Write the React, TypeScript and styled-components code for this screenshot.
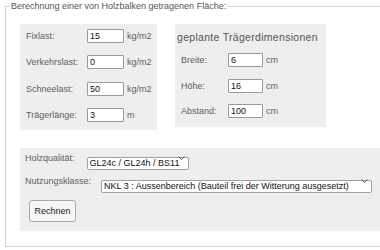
import React from "react";
import styled, { createGlobalStyle } from "styled-components";

const Global = createGlobalStyle`
  html, body { margin: 0; padding: 0; background: #fff; overflow: hidden; }
  body { font-family: "Liberation Sans", Arial, sans-serif; width: 380px; height: 250px; }
`;

const Frame = styled.fieldset`
  box-sizing: border-box;
  width: 375px;
  margin: 1px 0 0 5px;
  padding: 0 0 15px 0;
  border: 1px solid #d4d4d4;
  border-right: none;
  min-width: 0;
`;

const Legend = styled.legend`
  margin-left: 4px;
  padding: 0 1px;
  font-size: 9px;
  line-height: 10px;
  color: #555;
`;

const Content = styled.div`
  padding: 13px 0 0 14px;
  display: flex;
  flex-direction: column;
  gap: 18px;
`;

const TopRow = styled.div`
  display: flex;
  align-items: flex-start;
  gap: 18px;
`;

const Panel = styled.div<{ $w: number }>`
  box-sizing: border-box;
  width: ${(p) => p.$w}px;
  background: #eeeeee;
`;

const LoadPanel = styled(Panel)`
  display: grid;
  grid-template-columns: 58px 37px auto;
  column-gap: 3px;
  row-gap: 12.3px;
  align-items: center;
  padding: 5px 5px 8px 6px;
`;

const DimPanel = styled(Panel)`
  padding: 6px 0 9px 0;
`;

const DimTitle = styled.div`
  font-size: 10.5px;
  line-height: 14px;
  letter-spacing: 0.3px;
  color: #555;
  padding-left: 2px;
  white-space: nowrap;
`;

const DimGrid = styled.div`
  display: grid;
  grid-template-columns: 44px 35px auto;
  column-gap: 3px;
  row-gap: 11.5px;
  align-items: center;
  padding: 9px 0 0 6px;
`;

const Label = styled.span`
  font-size: 9px;
  line-height: 14px;
  color: #606060;
  white-space: nowrap;
`;

const Unit = styled(Label)``;

const Field = styled.input`
  box-sizing: border-box;
  width: 100%;
  height: 14px;
  margin: 0;
  padding: 0 0 0 2px;
  border: 1px solid #9a9a9a;
  border-radius: 1px;
  background: #fff;
  font-family: "Liberation Sans", Arial, sans-serif;
  font-size: 9px;
  color: #111;
  outline: none;
`;

const OptionsPanel = styled.div`
  background: #eeeeee;
  padding: 4px 0 9px 5px;
  display: flex;
  flex-direction: column;
  align-items: flex-start;
`;

const OptionRow = styled.div<{ $gap: number; $mb: number }>`
  display: flex;
  align-items: center;
  gap: ${(p) => p.$gap}px;
  margin-bottom: ${(p) => p.$mb}px;
  height: 13px;
`;

const SelectWrap = styled.div<{ $w: number }>`
  position: relative;
  width: ${(p) => p.$w}px;
  height: 13px;
`;

const Select = styled.select`
  box-sizing: border-box;
  appearance: none;
  -webkit-appearance: none;
  width: 100%;
  height: 100%;
  margin: 0;
  padding: 0 6px 0 2px;
  border: 1px solid #a0a0a0;
  border-radius: 2px;
  background: #fff;
  font-family: "Liberation Sans", Arial, sans-serif;
  font-size: 9px;
  line-height: 11px;
  color: #111;
  outline: none;
`;

const Chevron = styled.svg`
  position: absolute;
  right: 4px;
  top: 4.5px;
  width: 7px;
  height: 4px;
  pointer-events: none;
`;

const Button = styled.button`
  box-sizing: border-box;
  margin: 0 0 0 4px;
  width: 47px;
  height: 22px;
  padding: 0;
  border: 1px solid #a8a8a8;
  border-radius: 3px;
  background: #f6f6f6;
  font-family: "Liberation Sans", Arial, sans-serif;
  font-size: 9px;
  color: #222;
`;

function Dropdown({ w, value }: { w: number; value: string }) {
  return (
    <SelectWrap $w={w}>
      <Select defaultValue={value}>
        <option value={value}>{value}</option>
      </Select>
      <Chevron viewBox="0 0 7 4">
        <path d="M0.6 0.6 L3.5 3.4 L6.4 0.6" fill="none" stroke="#444" strokeWidth="0.9" />
      </Chevron>
    </SelectWrap>
  );
}

const loads = [
  { label: "Fixlast:", value: "15", unit: "kg/m2" },
  { label: "Verkehrslast:", value: "0", unit: "kg/m2" },
  { label: "Schneelast:", value: "50", unit: "kg/m2" },
  { label: "Trägerlänge:", value: "3", unit: "m" },
];

const dims = [
  { label: "Breite:", value: "6", unit: "cm" },
  { label: "Höhe:", value: "16", unit: "cm" },
  { label: "Abstand:", value: "100", unit: "cm" },
];

export default function App() {
  return (
    <>
      <Global />
      <Frame>
        <Legend>Berechnung einer von Holzbalken getragenen Fläche:</Legend>
        <Content>
          <TopRow>
            <LoadPanel $w={137}>
              {loads.map((r) => (
                <React.Fragment key={r.label}>
                  <Label>{r.label}</Label>
                  <Field defaultValue={r.value} />
                  <Unit>{r.unit}</Unit>
                </React.Fragment>
              ))}
            </LoadPanel>
            <DimPanel $w={151}>
              <DimTitle>geplante Trägerdimensionen</DimTitle>
              <DimGrid>
                {dims.map((r) => (
                  <React.Fragment key={r.label}>
                    <Label>{r.label}</Label>
                    <Field defaultValue={r.value} />
                    <Unit>{r.unit}</Unit>
                  </React.Fragment>
                ))}
              </DimGrid>
            </DimPanel>
          </TopRow>
          <OptionsPanel>
            <OptionRow $gap={12} $mb={10}>
              <Label>Holzqualität:</Label>
              <Dropdown w={102} value="GL24c / GL24h / BS11" />
            </OptionRow>
            <OptionRow $gap={10} $mb={12}>
              <Label>Nutzungsklasse:</Label>
              <Dropdown w={271} value="NKL 3 : Aussenbereich (Bauteil frei der Witterung ausgesetzt)" />
            </OptionRow>
            <Button>Rechnen</Button>
          </OptionsPanel>
        </Content>
      </Frame>
    </>
  );
}
